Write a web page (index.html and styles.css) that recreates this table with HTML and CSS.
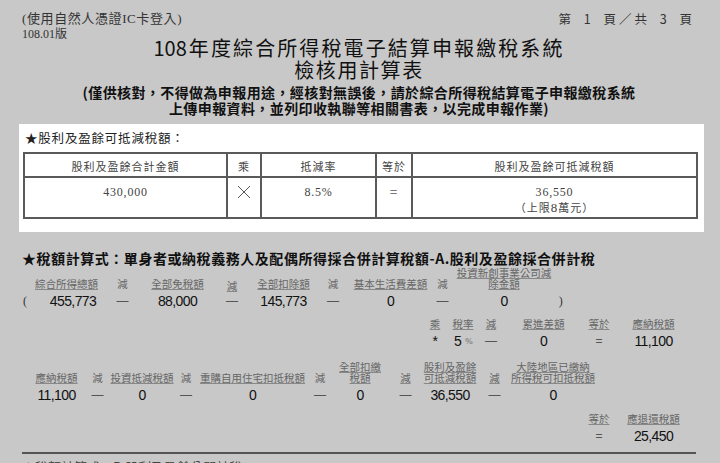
FILE: index.html
```html
<!DOCTYPE html>
<html lang="zh-Hant">
<head>
<meta charset="utf-8">
<title>108年度綜合所得稅電子結算申報繳稅系統 檢核用計算表</title>
<link rel="stylesheet" href="styles.css">
</head>
<body>
<div class="page">
  <header class="head">
    <div class="head-top">
      <div class="head-left">
        <div class="login-note">(使用自然人憑證IC卡登入)</div>
        <div class="version">108.01版</div>
      </div>
      <div class="page-no">第 1 頁／共 3 頁</div>
    </div>
    <h1 class="title">
      <span class="title-main"><span class="num">108</span>年度綜合所得稅電子結算申報繳稅系統</span>
      <span class="title-sub">檢核用計算表</span>
    </h1>
    <p class="notice">(僅供核對，不得做為申報用途，經核對無誤後，請於綜合所得稅結算電子申報繳稅系統<br>上傳申報資料，並列印收執聯等相關書表，以完成申報作業)</p>
  </header>

  <section class="panel">
    <h2 class="panel-title">★股利及盈餘可抵減稅額：</h2>
    <table class="calc">
      <colgroup>
        <col class="c-amount">
        <col class="c-op">
        <col class="c-rate">
        <col class="c-eq">
        <col class="c-result">
      </colgroup>
      <thead>
        <tr><th>股利及盈餘合計金額</th><th>乘</th><th>抵減率</th><th>等於</th><th>股利及盈餘可抵減稅額</th></tr>
      </thead>
      <tbody>
        <tr>
          <td><span class="tnum">430,000</span></td>
          <td><svg class="times" width="14" height="14" viewBox="0 0 14 14"><path d="M1 1 L13 13 M13 1 L1 13" stroke="#555" stroke-width="1" fill="none"/></svg></td>
          <td><span class="tnum">8.5%</span></td>
          <td><span class="eq">=</span></td>
          <td><span class="tnum">36,550</span><br>（上限<span class="tnum big">8</span>萬元）</td>
        </tr>
      </tbody>
    </table>
  </section>

  <section class="formula">
    <h2 class="formula-title">★稅額計算式：單身者或納稅義務人及配偶所得採合併計算稅額-A.股利及盈餘採合併計稅</h2>

    <div class="frow frow-1">
      <div class="cell cell-start"><span class="lbl"></span><span class="val paren">(</span></div>
      <div class="cell"><span class="lbl"><span class="u">綜合所得總額</span></span><span class="val shift">455,773</span></div>
      <div class="cell"><span class="lbl">減</span><span class="val op">—</span></div>
      <div class="cell"><span class="lbl"><span class="u">全部免稅額</span></span><span class="val">88,000</span></div>
      <div class="cell"><span class="lbl low"><span class="u">減</span></span><span class="val op">—</span></div>
      <div class="cell"><span class="lbl"><span class="u">全部扣除額</span></span><span class="val">145,773</span></div>
      <div class="cell"><span class="lbl">減</span><span class="val op">—</span></div>
      <div class="cell"><span class="lbl"><span class="u">基本生活費差額</span></span><span class="val">0</span></div>
      <div class="cell"><span class="lbl">減</span><span class="val op">—</span></div>
      <div class="cell"><span class="lbl"><span class="u">投資新創事業公司減<br>除金額</span></span><span class="val">0</span></div>
      <div class="cell"><span class="lbl"></span><span class="val paren">)</span></div>
    </div>

    <div class="frow frow-2">
      <div class="cell"><span class="lbl"><span class="u">乘</span></span><span class="val">*</span></div>
      <div class="cell"><span class="lbl"><span class="u">稅率</span></span><span class="val">5<span class="pct">%</span></span></div>
      <div class="cell"><span class="lbl"><span class="u">減</span></span><span class="val op">—</span></div>
      <div class="cell"><span class="lbl"><span class="u">累進差額</span></span><span class="val">0</span></div>
      <div class="cell"><span class="lbl"><span class="u">等於</span></span><span class="val op">=</span></div>
      <div class="cell"><span class="lbl"><span class="u">應納稅額</span></span><span class="val">11,100</span></div>
    </div>

    <div class="frow frow-3">
      <div class="cell"><span class="lbl"><span class="u">應納稅額</span></span><span class="val">11,100</span></div>
      <div class="cell"><span class="lbl">減</span><span class="val op">—</span></div>
      <div class="cell"><span class="lbl"><span class="u">投資抵減稅額</span></span><span class="val">0</span></div>
      <div class="cell"><span class="lbl">減</span><span class="val op">—</span></div>
      <div class="cell"><span class="lbl"><span class="u">重購自用住宅扣抵稅額</span></span><span class="val">0</span></div>
      <div class="cell"><span class="lbl">減</span><span class="val op">—</span></div>
      <div class="cell"><span class="lbl"><span class="u">全部扣繳<br>稅額</span></span><span class="val">0</span></div>
      <div class="cell"><span class="lbl"><span class="u">減</span></span><span class="val op">—</span></div>
      <div class="cell"><span class="lbl"><span class="u">股利及盈餘<br>可抵減稅額</span></span><span class="val">36,550</span></div>
      <div class="cell"><span class="lbl"><span class="u">減</span></span><span class="val op">—</span></div>
      <div class="cell"><span class="lbl"><span class="u">大陸地區已繳納<br>所得稅可扣抵稅額</span></span><span class="val">0</span></div>
    </div>

    <div class="frow frow-4">
      <div class="cell"><span class="lbl"><span class="u">等於</span></span><span class="val op">=</span></div>
      <div class="cell"><span class="lbl"><span class="u">應退還稅額</span></span><span class="val">25,450</span></div>
    </div>

    <hr class="rule">
    <p class="next">★稅額計算式：B.股利及盈餘分開計稅</p>
  </section>
</div>
</body>
</html>
```

FILE: styles.css
```css
* {
  box-sizing: border-box;
  margin: 0;
  padding: 0;
}

html,
body {
  background: #c8c8c8;
}

body {
  width: 720px;
  height: 463px;
  overflow: hidden;
  font-family: "Noto Sans CJK TC", sans-serif;
  color: #222;
}

.page {
  padding: 11px 24px 0 22px;
}

/* header */
.head-top {
  display: flex;
  justify-content: space-between;
  align-items: flex-start;
}

.login-note {
  font-family: "Liberation Serif", "Noto Sans CJK TC", serif;
  font-size: 13px;
  line-height: 16px;
  letter-spacing: 0.6px;
  color: #333;
}

.version {
  font-family: "Liberation Serif", "Noto Sans CJK TC", serif;
  font-size: 12px;
  line-height: 14px;
  color: #333;
}

.page-no {
  font-size: 12.5px;
  line-height: 16px;
  letter-spacing: 3px;
  word-spacing: 4px;
  color: #333;
  margin-right: 1px;
}

.title {
  margin-top: -4px;
  text-align: center;
  font-weight: 400;
  color: #111;
}

.title-main {
  display: block;
  font-size: 20px;
  line-height: 22px;
  letter-spacing: 2.1px;
}

.title-main .num {
  letter-spacing: 0;
  margin-right: 2.1px;
}

.title-sub {
  display: block;
  font-size: 20px;
  line-height: 22px;
  letter-spacing: 1.6px;
}

.notice {
  margin-top: 3px;
  text-align: center;
  font-size: 14px;
  line-height: 16px;
  font-weight: 700;
  letter-spacing: 0.4px;
  color: #111;
}

/* panel */
.panel {
  background: #fff;
  margin: 8px -8px 0 -3px;
  padding: 5px 8px 13px 4px;
}

.panel-title {
  font-size: 12.5px;
  line-height: 18px;
  font-weight: 400;
  letter-spacing: 0.8px;
  padding-left: 2px;
  margin-bottom: 5px;
  color: #222;
}

.calc {
  width: 673px;
  border-collapse: collapse;
  table-layout: fixed;
  font-size: 11px;
  color: #444;
}

.c-amount { width: 203px; }
.c-op { width: 34px; }
.c-rate { width: 115px; }
.c-eq { width: 36px; }
.c-result { width: 285px; }

.calc th,
.calc td {
  border: 2px solid #5a5a5a;
  text-align: center;
  font-weight: 400;
  letter-spacing: 1px;
}

.calc th {
  height: 24px;
  padding-top: 2px;
  line-height: 16px;
}

.calc td {
  height: 41px;
  vertical-align: top;
  padding-top: 6px;
  line-height: 15px;
}

.tnum {
  font-family: "Liberation Serif", serif;
  font-size: 12px;
  letter-spacing: 0.8px;
}

.tnum.big {
  font-size: 13px;
  letter-spacing: 1px;
}

.times {
  display: block;
  margin: 1px auto 0;
}

.eq {
  font-family: "Liberation Sans", sans-serif;
  font-size: 13px;
  color: #777;
}

/* formula */
.formula {
  margin-top: 18px;
}

.formula-title {
  font-size: 14px;
  line-height: 17px;
  font-weight: 700;
  letter-spacing: 0.55px;
  color: #111;
}

.frow {
  display: grid;
}

.frow-1 {
  grid-template-columns: 11px 67px 45px 65px 44px 59px 40px 75px 29px 94px 19px;
}

.frow-2 {
  margin-left: 404px;
  grid-template-columns: 18px 38px 18px 87px 24px 85px;
}

.frow-3 {
  grid-template-columns: 69px 13px 76px 12px 121px 14px 66px 25px 64px 25px 92px;
}

.frow-4 {
  margin-left: 565px;
  grid-template-columns: 24px 85px;
}

.cell {
  display: flex;
  flex-direction: column;
  align-items: center;
}

.cell-start {
  align-items: flex-start;
  padding-left: 1px;
}

.lbl {
  display: flex;
  flex-direction: column;
  justify-content: flex-end;
  align-items: center;
  text-align: center;
  font-size: 10.5px;
  line-height: 11px;
  color: #666;
  white-space: nowrap;
}

.frow-1 .lbl { height: 22px; }
.frow-2 .lbl { height: 16px; }
.frow-3 .lbl { height: 30px; }
.frow-4 .lbl { height: 17px; }

.frow-1 .lbl.low {
  transform: translateY(2px);
}

.u {
  text-decoration: underline;
  text-decoration-color: #888;
  text-underline-offset: 1px;
}

.val {
  font-family: "Liberation Sans", sans-serif;
  font-size: 14px;
  line-height: 24px;
  letter-spacing: -0.6px;
  color: #111;
  white-space: nowrap;
}

.val.shift {
  padding-left: 13px;
}

.val.op {
  font-size: 12px;
  letter-spacing: 0;
  color: #555;
}

.val.paren {
  font-family: "Liberation Serif", serif;
  font-size: 12px;
  color: #333;
}

.pct {
  font-family: "Liberation Serif", serif;
  font-size: 9px;
  color: #666;
  margin-left: 4px;
  vertical-align: 2px;
}

.rule {
  border: 0;
  border-top: 2px solid #555;
  margin-top: 4px;
}

.next {
  margin-top: 5px;
  font-size: 13px;
  line-height: 16px;
  color: #444;
}
```
